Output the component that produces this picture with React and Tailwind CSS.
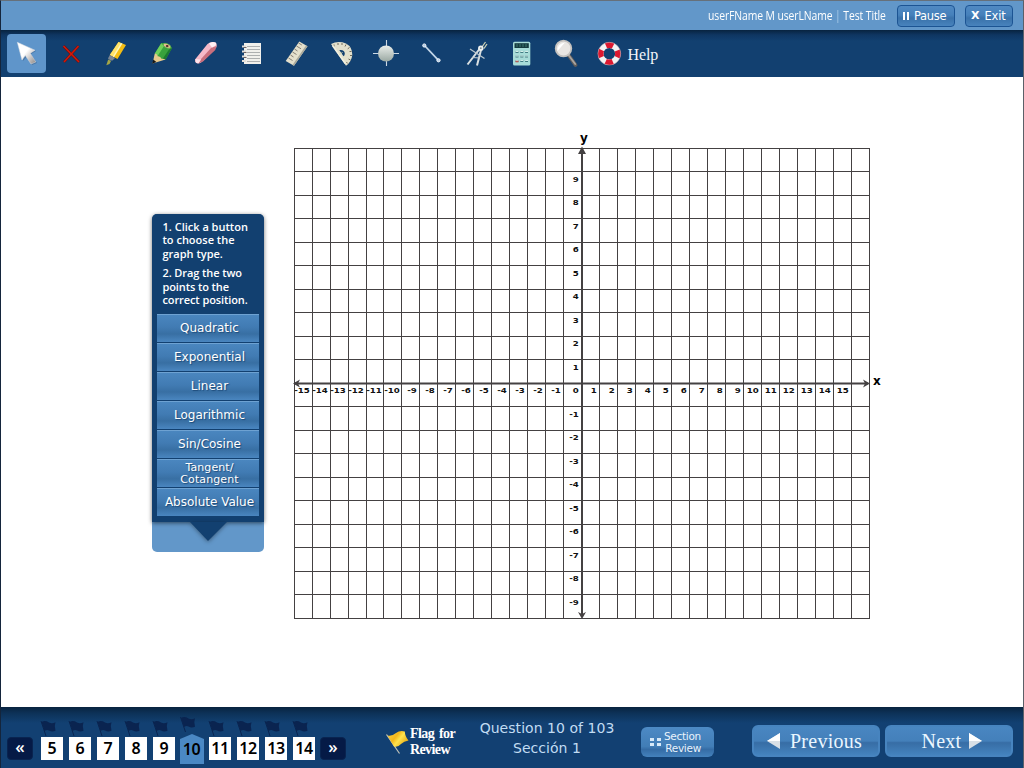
import React from "react";

const GRID_X = [294, 312, 330, 348, 366, ...Array.from({ length: 28 }, (_, i) => 383 + 18 * i)].filter((x) => x !== 581);
const GRID_Y = Array.from({ length: 21 }, (_, i) => Math.floor(148 + 23.5 * i)).filter((y) => y !== 383);
const X_LABELS = Array.from({ length: 31 }, (_, i) => i - 15);
const Y_LABELS = Array.from({ length: 19 }, (_, i) => i - 9).filter((n) => n !== 0);
const GRAPH_TYPES = ["Quadratic", "Exponential", "Linear", "Logarithmic", "Sin/Cosine", "Tangent/Cotangent", "Absolute Value"];
const QUESTIONS = [5, 6, 7, 8, 9, 10, 11, 12, 13, 14];

const serif = "font-['Liberation_Serif',serif]";

function Tool({ index, active, children }) {
  return (
    <button className={active ? "h-[39px] w-[39px] rounded bg-[#5f95ca]" : "h-[39px] w-[39px] rounded"}>
      <svg viewBox={`${7 + 45 * index} 34 39 39`} width="39" height="39">
        {children}
      </svg>
    </button>
  );
}

function Toolbar() {
  return (
    <div className="flex h-[47px] items-start gap-[6px] bg-[linear-gradient(#08233f_0px,#0f3662_5px,#124070_11px,#124070_100%)] pt-1 pl-[6px]">
      <Tool index={0} active>
        <defs>
          <linearGradient id="arrow" x1="0" y1="0" x2="1" y2="1">
            <stop offset="0.45" stopColor="#fff" />
            <stop offset="1" stopColor="#8b8583" />
          </linearGradient>
        </defs>
        <path d="M18.5 44 L23 61 L26.5 57 L32 65 L37 63 L31 54 L36 51Z" fill="#40658d" opacity=".6" />
        <path d="M17.3 42.3 L22 60 L25.3 55.5 L31 64 L35.8 62 L30.3 53.2 L35 50.2Z" fill="url(#arrow)" stroke="#d9dde2" strokeWidth=".5" />
      </Tool>
      <Tool index={1}>
        <path d="M63.5 46 L79 62 M78.5 46 L64 62" stroke="#5d1418" strokeWidth="2.6" />
        <path d="M63.5 46 L79 62 M78.5 46 L64 62" stroke="#d31808" strokeWidth="1.6" />
      </Tool>
      <Tool index={2}>
        <path d="M118.5 42 L126 45 L117.5 59 L109.8 55Z" fill="#f4bd13" />
        <path d="M118.5 42 L121.5 43.2 L113 56.5 L109.8 55Z" fill="#ffe36a" />
        <path d="M121 43 L122.5 43.6 L114 57.3 L112.7 56.6Z" fill="#fff7bd" />
        <path d="M109.8 55 L115 58 L112.5 60.5 L110.5 60.5 L108 58.6Z" fill="#7d8793" />
        <path d="M108.2 59.5 L111 61 L109.5 64 L106.3 65.3Z" fill="#a5a647" />
      </Tool>
      <Tool index={3}>
        <path d="M161.2 43.3 Q168 41.5 172 48 L165.5 59.5 L159.5 59 L154.8 53.5Z" fill="#39a23c" />
        <path d="M161.2 43.3 L164 46 L157.6 56 L154.8 53.5Z" fill="#6fd05c" />
        <path d="M169 49.5 L172 48 L165.5 59.5 L162.5 59Z" fill="#1c7a2f" />
        <path d="M154.8 53.5 Q157 53.8 157.8 56.3 Q160.5 56 161.5 58.8 Q164 58.5 165.5 59.5 L152.5 63.5Z" fill="#e7c98c" />
        <path d="M153.3 59.5 L156.3 62 L152.2 63.8Z" fill="#151515" />
        <ellipse cx="167" cy="45.8" rx="4" ry="2" transform="rotate(24 167 45.8)" fill="#e5be91" stroke="#46a83f" strokeWidth=".6" />
        <ellipse cx="167.2" cy="45.9" rx="1.4" ry="1" fill="#4a2525" />
      </Tool>
      <Tool index={4}>
        <path d="M195 59.5 L207.5 44 Q211 41 215.5 42.5 Q217.5 44 216.3 47.5 L204 60 Q199 65 196.5 63 Q194.5 62 195 59.5Z" fill="#f6b9c8" />
        <path d="M216.3 46 L215.3 50 L203 61.5 L198.5 63.5 L201.5 58.5 L211 48Z" fill="#c96f7d" />
        <path d="M209 43.5 Q212 41 215.5 42.5 Q217 43.5 215.5 45.5 L212 47.5Z" fill="#fff0f3" />
        <path d="M195.5 59 L201 59.5 L198.5 63.2 L196 62.7Z" fill="#ffe3ea" />
      </Tool>
      <Tool index={5}>
        <rect x="244" y="43" width="17" height="21" fill="#f1f0ec" />
        <path d="M247 46.5H260M247 49.5H260M247 52.5H260M247 55.5H260M247 58.5H260M247 61.5H260" stroke="#aeb0b0" strokeWidth="1" />
        <path d="M242 46.5H246M242 51.5H246M242 56.5H246M242 61H246" stroke="#e5e0da" strokeWidth="1.8" />
        <path d="M243.5 47.5H246.5M243.5 52.5H246.5M243.5 57.5H246.5" stroke="#6c6260" strokeWidth="1" />
      </Tool>
      <Tool index={6}>
        <path d="M299.3 41.5 L307.5 46.3 L294 65.8 L285.7 61Z" fill="#e4e0cc" />
        <path d="M306 45.5 L307.5 46.3 L294 65.8 L292.5 65Z" fill="#aaa99b" />
        <path d="M298.5 43 L301.8 45 M296.5 46 L301 48.8 M294.5 49 L297.5 51 M292.5 52 L296.5 54.5 M290.5 55 L293.5 57 M288.5 58 L292.5 60.5" stroke="#6d665e" strokeWidth=".8" />
      </Tool>
      <Tool index={7}>
        <path fillRule="evenodd" d="M331 44 Q338 40.5 346 43.5 Q352.5 47 352.3 55 Q351.5 62 346 65.8Z M339.3 50 Q344.5 49.3 344.8 53.5 Q344.8 55.5 343.5 56.2Z" fill="#e3e0cc" />
        <path d="M334 44.5V46.5M338 43V45M342 43V45M346 44.5L345 46.5M349.5 47.5L347.7 48.8M351.5 51.5H349.5M352 55.5H350M350.5 60L348.5 59M347.8 63.5L346.3 62" stroke="#645e4e" strokeWidth=".9" />
        <path d="M332.5 45.5 L345.3 63.5" stroke="#f2f0e0" strokeWidth="1.6" />
        <path d="M339.5 54.5 L342.5 52.5" stroke="#d9d6b4" strokeWidth="1" />
      </Tool>
      <Tool index={8}>
        <defs>
          <linearGradient id="ball" x1="0" y1="0" x2="0" y2="1">
            <stop offset="0" stopColor="#e9edea" />
            <stop offset="1" stopColor="#9aa8a2" />
          </linearGradient>
        </defs>
        <path d="M373 53.5H399M386.5 40V66" stroke="#cbd8e4" strokeWidth="1.1" />
        <circle cx="386" cy="53.5" r="8" fill="url(#ball)" />
      </Tool>
      <Tool index={9}>
        <path d="M424.5 45.5 L438.5 60.3" stroke="#c3d6e8" strokeWidth="1.8" />
        <circle cx="424.3" cy="45.5" r="1.6" fill="#b0cce8" stroke="#f5f7fa" />
        <circle cx="438.5" cy="60.3" r="1.6" fill="#b0cce8" stroke="#f5f7fa" />
      </Tool>
      <Tool index={10}>
        <path d="M479.5 49 L467.5 64.5 M481 50 L477 65.5" stroke="#dbe1e3" strokeWidth="2" />
        <path d="M470 49 L484.5 58.5" stroke="#b9c5cc" strokeWidth="1.3" />
        <path d="M472 57.5 L480 58" stroke="#c3ccd0" strokeWidth="1.1" />
        <path d="M482 47 L485.5 42 M484 48.5 L487 44" stroke="#ccd0b4" strokeWidth="1.3" />
        <circle cx="480.8" cy="48.2" r="2.7" fill="#edf0ef" />
        <circle cx="480.8" cy="48.2" r=".9" fill="#7d8c92" />
      </Tool>
      <Tool index={11}>
        <rect x="513" y="41.8" width="17.3" height="23.6" rx="1.5" fill="#a8dcd8" />
        <rect x="514.5" y="43.2" width="14.3" height="4.8" fill="#163c40" />
        <path d="M517 44V47M520 44V47M523 44V47M526 44V47" stroke="#3f7871" />
        <path d="M515.5 52H528M515.5 56.5H528M515.5 61H528" stroke="#427c83" strokeWidth="2.2" strokeDasharray="3 1.8" />
        <path d="M515.5 51.5H528M515.5 56H528M515.5 60.5H528" stroke="#d5efe9" strokeWidth="1" strokeDasharray="3 1.8" />
        <path d="M515.5 61.5H518.5" stroke="#b65c55" strokeWidth="1.6" />
      </Tool>
      <Tool index={12}>
        <path d="M568.5 55 L575.5 65" stroke="#625e5c" strokeWidth="3.8" strokeLinecap="round" />
        <path d="M568.5 55 L575.2 64" stroke="#aaa5a0" strokeWidth="1.8" strokeLinecap="round" />
        <circle cx="563.5" cy="48.5" r="7.8" fill="#e9e6e3" stroke="#c5c2bf" strokeWidth="1.8" />
        <path d="M557.5 51 Q557 43.5 565 42.5 Q561 47 557.5 51" fill="#fff" />
      </Tool>
      <button className="flex h-[39px] items-center">
        <svg viewBox="592 34 34 39" width="34" height="39">
          <circle cx="609.3" cy="53.7" r="8.6" fill="none" stroke="#f3f3f3" strokeWidth="5.6" />
          <circle cx="609.3" cy="53.7" r="8.6" fill="none" stroke="#dc1830" strokeWidth="5.6" strokeDasharray="7.3 6.21" strokeDashoffset="3.65" />
          <circle cx="609.3" cy="53.7" r="11.4" fill="none" stroke="#b9a5ad" strokeWidth=".5" />
        </svg>
        <span className={`${serif} mt-[2px] ml-[1.5px] text-[16px] tracking-[-0.1px] text-[#f1f5fa]`}>Help</span>
      </button>
    </div>
  );
}

function TopBar() {
  const btn = "mt-[1px] flex h-[22px] items-center rounded-[4px] border border-[#1c5493] bg-[linear-gradient(#5089c2,#4681bb_45%,#3a72aa_60%,#4883bd)] text-[12px] text-white font-['DejaVu_Sans',sans-serif]";
  return (
    <div className="flex h-[29px] items-center bg-[#6297c9] pl-[707px]">
      <div className="w-[189px] pb-[4px] whitespace-nowrap">
        <span className="inline-block origin-left scale-x-[0.865] font-['Open_Sans',sans-serif] text-[12px] tracking-[-0.1px] text-white">
          userFName M userLName <span className="text-[#a9cbe9]">|</span> Test Title
        </span>
      </div>
      <button className={`${btn} w-[58px] pl-[5px]`}>
        <span className="mr-[5px] flex gap-[2px]">
          <i className="h-2 w-[2px] bg-white" />
          <i className="h-2 w-[2px] bg-white" />
        </span>
        <span className="mt-[2px] text-[11.5px] tracking-[-0.3px]">Pause</span>
      </button>
      <button className={`${btn} ml-[10px] w-[48px] pl-[5px]`}>
        <b className="mt-px mr-[5px] text-[11px]">X</b>
        <span className="mt-[2px] text-[11.5px] tracking-[-0.2px]">Exit</span>
      </button>
    </div>
  );
}

function GraphPanel() {
  return (
    <aside className="mt-[137px] ml-[151px] h-[338px] w-[112px] rounded-[5px] bg-[#6297c9]">
      <div className="h-[308px] rounded-t-[5px] bg-[#124070] px-[5px] pt-[6px] text-white shadow-[0_1px_4px_rgba(0,0,0,0.55)]">
        <div className="pl-[5.5px] font-['Open_Sans',sans-serif] text-[11px] leading-[13.4px] font-semibold whitespace-nowrap">
          <p>1. Click a button<br />to choose the<br />graph type.</p>
          <p className="mt-[6px] tracking-[-0.1px]">2. Drag the two<br />points to the<br />correct position.</p>
        </div>
        <div className="mt-[8px] flex flex-col gap-px font-['DejaVu_Sans',sans-serif]">
          {GRAPH_TYPES.map((t) => (
            <button
              key={t}
              className="flex h-7 items-center justify-center border-t border-[#6ea2d2] bg-[linear-gradient(#4a86bf,#417bb3_45%,#386fa3_70%,#4a86c0)] pb-px pl-[3px] text-[12px] whitespace-nowrap [text-shadow:1px_1px_1px_#1d4a78]"
            >
              {t === "Tangent/Cotangent" ? <span className="mt-[2px] text-[11px] leading-[12px] tracking-[0.1px]">Tangent/<br />Cotangent</span> : t}
            </button>
          ))}
        </div>
      </div>
      <svg width="112" height="24" viewBox="0 0 112 24" className="drop-shadow-[0_1px_2px_rgba(0,0,0,0.4)]">
        <path d="M38 0H75L56 19Z" fill="#124070" />
      </svg>
    </aside>
  );
}

function AxisLabel({ x, y, children }) {
  return (
    <text transform={`translate(${x} ${y}) scale(1.14 1)`}>{children}</text>
  );
}

function Graph() {
  return (
    <svg viewBox="288 127 600 500" width="600" height="500" className="mt-[50px] ml-[24px] font-['DejaVu_Sans',sans-serif] font-bold">
      <g fill="#444142">
        {GRID_X.map((x) => <rect key={x} x={x} y="148" width="1" height="471" />)}
        {GRID_Y.map((y) => <rect key={y} x="294" y={y} width="576" height="1" />)}
        <rect x="581" y="150" width="2" height="466" />
        <rect x="295" y="382.5" width="573" height="2" />
        <path d="M582 146.5 L586 154 L578 154Z" />
        <path d="M582 619 L578 612 L582 614 L586 612Z" />
        <path d="M293 383.5 L300 379.5 L298 383.5 L300 387.5Z" />
        <path d="M870 383.5 L863 379.5 L865 383.5 L863 387.5Z" />
      </g>
      <g fontSize="7.6" textAnchor="end" fill="#111">
        {X_LABELS.map((n) => <AxisLabel key={n} x={578.8 + 18 * n + (n < -9 ? 1 : 0)} y={393}>{n}</AxisLabel>)}
        {Y_LABELS.map((n) => <AxisLabel key={n} x={578.8} y={Math.floor(393.7 - 23.5 * n)}>{n}</AxisLabel>)}
      </g>
      <text x="580" y="142" fontSize="12">y</text>
      <text x="873" y="385" fontSize="12">x</text>
    </svg>
  );
}

function QuestionTab({ n }) {
  const current = n === 10;
  const digits = "font-['Noto_Sans',sans-serif] text-[16px] font-semibold tracking-[-0.4px] text-black";
  return (
    <div className={current ? "-mt-[3px] flex w-[24px] flex-col" : "flex w-[22px] flex-col"}>
      <svg width="22" height="17" viewBox={current ? "-.5 1 22 17" : "0 0 22 17"} className="overflow-visible">
        <path d="M0 1 L5 16" stroke="#0a2450" strokeWidth="1" />
        <path d="M.5 2 Q4 0 8 2.5 Q11 4 14.5 2.3 Q13 6 14.5 10.8 Q11 12.5 8 10.5 Q6 9.5 3.5 11Z" fill="#0a2450" />
      </svg>
      {current ? (
        <div className={`${digits} flex h-[30px] items-center justify-center bg-[#4a88c4] pr-px [clip-path:polygon(50%_0,100%_5px,100%_100%,0_100%,0_5px)]`}>10</div>
      ) : (
        <div className={`${digits} flex h-[23px] items-center justify-center bg-white pb-[1px]`}>{n}</div>
      )}
    </div>
  );
}

function Footer() {
  const navBtn = "mt-[17px] flex h-[23px] w-[26px] items-center justify-center rounded-[4px] border border-[#092450] bg-[#051a46] pb-[3px] font-['Open_Sans',sans-serif] text-[17px] font-semibold text-white";
  const big = `${serif} mt-[5px] flex h-8 w-[128px] items-center rounded-[6px] border-2 border-[#4784bf] bg-[linear-gradient(#4986c1,#4480ba_50%,#376da5_56%,#4483be)] text-[20px] text-[#eaf6ff]`;
  return (
    <footer className="flex h-[61px] items-start bg-[linear-gradient(#08233f_0px,#0d3157_6px,#124072_16px,#124072_100%)] pt-[13px] pl-[6px]">
      <button className={navBtn}>«</button>
      <div className="ml-[8px] flex w-[279px] gap-[6px]">
        <div className="flex gap-[6px]">{QUESTIONS.slice(0, 5).map((n) => <QuestionTab key={n} n={n} />)}</div>
        <div className="-mx-px"><QuestionTab n={10} /></div>
        <div className="flex gap-[6px]">{QUESTIONS.slice(6).map((n) => <QuestionTab key={n} n={n} />)}</div>
      </div>
      <button className={navBtn}>»</button>
      <button className="mt-[4px] ml-[38px] flex w-[71px] items-start">
        <svg width="24" height="30" viewBox="384 724 24 30" className="shrink-0 overflow-visible">
          <defs>
            <linearGradient id="flag" x1="0" y1="0" x2="1" y2="0.6">
              <stop offset="0" stopColor="#ffd447" />
              <stop offset=".45" stopColor="#f3b71b" />
              <stop offset=".65" stopColor="#ffe34d" />
              <stop offset="1" stopColor="#e6a913" />
            </linearGradient>
          </defs>
          <path d="M386.5 734.5 L399.5 753.5" stroke="#c4c6bb" strokeWidth="1.2" />
          <path d="M387.5 735.5 Q392 736.5 396 733 Q400 730 404.8 731.5 Q405 736.5 408.5 740.5 Q404 741 401 744 Q398 747.5 394 746.5Z" fill="url(#flag)" />
        </svg>
        <span className={`${serif} mt-[2px] ml-[2px] text-left text-[14px] leading-[15.5px] font-bold tracking-[-0.6px] whitespace-nowrap text-white [word-spacing:2px]`}>Flag for<br />Review</span>
      </button>
      <div className="-mt-[2px] ml-[14px] w-[156px] text-center font-['DejaVu_Sans',sans-serif] text-[14px] leading-[20px] tracking-[0.04px] text-[#c1dcf3]">
        Question 10 of 103<br />Sección 1
      </div>
      <button className="mt-[7px] ml-[16px] flex h-[30px] w-[73px] items-center rounded-[6px] bg-[linear-gradient(#4d8ac5,#417db6_65%,#356ca5_75%,#4482bd)] pl-[9px] font-['DejaVu_Sans',sans-serif] text-[10.5px] leading-[12px] text-[#e8f3fc]">
        <span className="mr-[3px] grid grid-cols-2 gap-x-[3px] gap-y-[2px]">
          <i className="h-[3px] w-[4px] bg-[#d7e9f8]" /><i className="h-[3px] w-[4px] bg-[#d7e9f8]" />
          <i className="h-[3px] w-[4px] bg-[#d7e9f8]" /><i className="h-[3px] w-[4px] bg-[#d7e9f8]" />
        </span>
        <span className="text-right tracking-[-0.3px]">Section<br />Review</span>
      </button>
      <button className={`${big} ml-[38px] pl-[13px]`}>
        <svg width="14" height="16" className="mr-[9px]"><path d="M0 8L13 0V16Z" fill="#d9e0e6" /><path d="M0 8L13 0V8Z" fill="#fff" /></svg>
        <span className="tracking-[0.25px]">Previous</span>
      </button>
      <button className={`${big} ml-[5px] pl-[34.5px]`}>
        <span className="tracking-[0.2px]">Next</span>
        <svg width="14" height="16" className="ml-[8px]"><path d="M13 8L0 0V16Z" fill="#d9e0e6" /><path d="M13 8L0 0V8Z" fill="#fff" /></svg>
      </button>
    </footer>
  );
}

export default function App() {
  return (
    <div className="h-[768px] w-[1024px] overflow-hidden border-t border-r border-l border-t-[#66707a] border-r-[#5b6068] border-l-[#14253c] bg-white">
      <TopBar />
      <Toolbar />
      <main className="flex h-[630px] items-start">
        <GraphPanel />
        <Graph />
      </main>
      <Footer />
    </div>
  );
}
